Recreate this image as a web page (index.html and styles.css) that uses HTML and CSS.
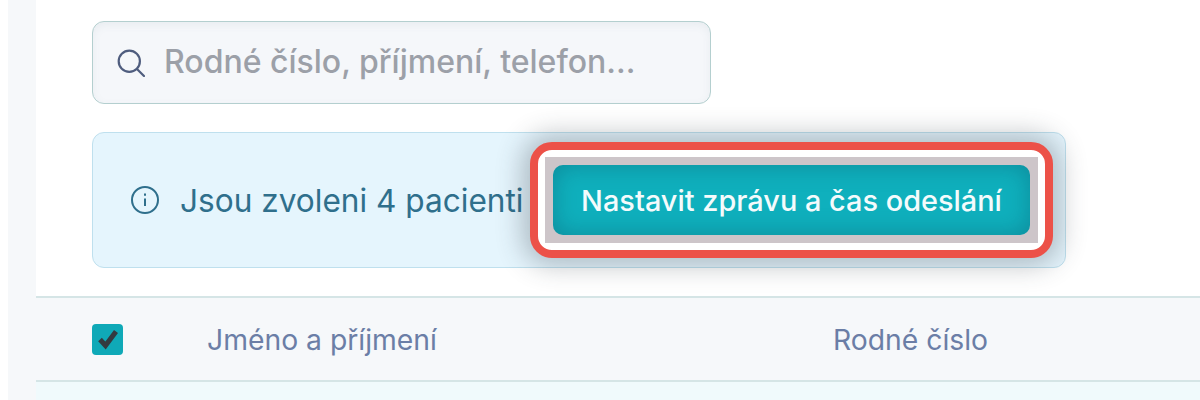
FILE: index.html
```html
<!DOCTYPE html>
<html lang="cs">
<head>
<meta charset="utf-8">
<title>Pacienti</title>
<link rel="stylesheet" href="styles.css">
</head>
<body>
<div class="rail"></div>
<main class="main">
  <div class="top">
    <div class="search">
      <svg class="search-icon" viewBox="0 0 28 28" fill="none" stroke="#4f5d7e" stroke-width="2.2" stroke-linecap="round"><circle cx="12.3" cy="12.3" r="10.6"/><path d="M20 20L27 27"/></svg>
      <span class="placeholder">Rodné číslo, příjmení, telefon...</span>
    </div>
    <div class="alert">
      <svg class="info-icon" viewBox="0 0 28 28" fill="none" stroke="#2f6f8c" stroke-width="2"><circle cx="14" cy="14" r="13"/><path d="M14 12.5V20"/><path d="M14 7.5v2.2"/></svg>
      <span class="alert-text">Jsou zvoleni 4 pacienti</span>
      <div class="mark">
        <div class="mark-inner">
          <button class="cta">Nastavit zprávu a čas odeslání</button>
        </div>
      </div>
    </div>
  </div>
  <div class="thead">
    <span class="check"><svg viewBox="0 0 24 24" fill="none" stroke="#333a40" stroke-width="5"><path d="M4 12.5L9.5 18.5L20 4.5"/></svg></span>
    <span class="th th-name">Jméno a příjmení</span>
    <span class="th th-id">Rodné číslo</span>
  </div>
  <div class="row"></div>
</main>
</body>
</html>
```
FILE: styles.css
```css
* { box-sizing: border-box; }
html, body { margin: 0; height: 400px; overflow: hidden; }
body {
  display: flex;
  padding-left: 8px;
  background: #fff;
  font-family: "Inter", "Liberation Sans", sans-serif;
}
.rail { width: 28px; flex: none; background: #f6f8fa; }
.main { flex: 1; min-width: 0; display: flex; flex-direction: column; }
.top { height: 296px; padding: 21px 0 0 56px; display: flex; flex-direction: column; gap: 28px; align-items: flex-start; }
.search {
  width: 619px; height: 83px;
  border: 1.5px solid #b4cfcf;
  border-radius: 12px;
  background: #f5f7fa;
  box-shadow: inset 0 3px 8px rgba(90, 110, 130, .08);
  display: flex; align-items: center;
  padding: 0 0 2px 24px; gap: 19px;
}
.search-icon { width: 28px; height: 28px; flex: none; margin-top: 2px; }
.placeholder { font-size: 32px; color: #9ca0a8; font-weight: 500; white-space: nowrap; }
.alert {
  width: 974px; height: 136px;
  border: 1.5px solid #bfe0ee;
  border-radius: 12px;
  background: #e5f5fd;
  display: flex; align-items: center;
  padding-left: 38px;
}
.info-icon { width: 28px; height: 28px; flex: none; margin-right: 21px; }
.alert-text { font-size: 31.6px; color: #2f6f8c; width: 350px; flex: none; white-space: nowrap; }
.mark {
  border: 8px solid #ec5148;
  border-radius: 22px;
  background: #fff;
  padding: 7px;
  box-shadow: 0 0 26px 8px rgba(50, 60, 70, .3);
}
.mark-inner { background: #cdc5c9; padding: 8px; }
.cta {
  display: block;
  width: 477px; height: 70px;
  border: 0;
  border-radius: 10px;
  background: #0fb0bd;
  box-shadow: inset 0 0 24px rgba(10, 80, 100, .4);
  color: #f4fbfc;
  font: 500 28.9px "Inter", "Liberation Sans", sans-serif;
  padding: 0;
}
.thead {
  height: 86px;
  flex: none;
  background: #f6f8fa;
  border-top: 2px solid #d5e5e6;
  border-bottom: 2px solid #d5e5e6;
  display: flex; align-items: center;
  padding-left: 56px;
}
.check {
  width: 31px; height: 31px; flex: none;
  border-radius: 4px;
  background: #0fa9b7;
  display: flex; align-items: center; justify-content: center;
}
.check svg { width: 24px; height: 24px; }
.th { font-size: 28.3px; color: #6b7ea6; white-space: nowrap; padding-top: 1px; }
.th-name { margin-left: 84px; width: 626px; flex: none; }
.row { flex: 1; background: #f0fafc; }
```
